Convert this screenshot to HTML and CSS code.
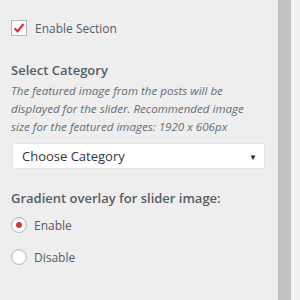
FILE: index.html
```html
<!DOCTYPE html>
<html lang="en">
<head>
  <meta charset="UTF-8" />
  <title>Slider Section</title>
  <link rel="stylesheet" href="styles.css">
</head>
<body>

<div class="panel">
  <div class="content">
    <label class="check-row">
      <span class="checkbox">
        <svg width="12" height="12" viewBox="0 0 12 12"><path d="M1.5 6.2 L4.6 9.3 L10.5 2" fill="none" stroke="#dd3333" stroke-width="2.2"/></svg>
      </span>
      Enable Section
    </label>

    <div class="field">
      <div class="field-title">Select Category</div>
      <p class="desc">The featured image from the posts will be displayed for the slider. Recommended image size for the featured images: 1920 x 606px</p>
      <div class="select">
        <span>Choose Category</span>
        <span class="arrow">&#9660;</span>
      </div>
    </div>

    <div class="field field-radio">
      <div class="field-title">Gradient overlay for slider image:</div>
      <label class="radio-row"><span class="radio checked"></span>Enable</label>
      <label class="radio-row"><span class="radio"></span>Disable</label>
    </div>
  </div>

  <div class="scrollbar">
    <div class="thumb"></div>
    <div class="edge"></div>
  </div>
</div>

</body>
</html>
```

FILE: styles.css
```css
* { box-sizing: border-box; }
body {
  margin: 0;
  font-family: 'Open Sans', 'Noto Sans', sans-serif;
  background: #eeeeee;
  color: #555d66;
  width: 300px;
  height: 300px;
  overflow: hidden;
}
.panel {
  display: flex;
  height: 300px;
}
.content {
  flex: 1;
  padding: 20px 12px 0 11px;
}
.check-row {
  display: flex;
  align-items: center;
  gap: 8px;
  font-size: 12px;
  height: 16px;
  color: #555d66;
}
.checkbox {
  width: 16px;
  height: 16px;
  background: #fff;
  border: 1px solid #b4b9be;
  display: flex;
  align-items: center;
  justify-content: center;
}
.field {
  margin-top: 25px;
}
.field-title {
  font-size: 13px;
  font-weight: 600;
  color: #555d66;
  line-height: 18px;
}
.desc {
  margin: 3px 8px 7px 0;
  font-size: 11.6px;
  font-style: italic;
  line-height: 18px;
  color: #666d74;
}
.select {
  display: flex;
  justify-content: space-between;
  align-items: center;
  width: 253px;
  height: 26px;
  margin-left: 1px;
  background: #fff;
  border: 1px solid #e5e5e5;
  padding: 0 7px 0 9px;
  font-size: 13px;
  color: #32373c;
}
.arrow {
  font-size: 8px;
  color: #23282d;
}
.field-radio {
  margin-top: 20px;
}
.radio-row {
  display: flex;
  align-items: center;
  gap: 7px;
  font-size: 12px;
  margin-top: 7px;
  height: 22px;
}
.radio-row + .radio-row {
  margin-top: 10px;
}
.radio {
  width: 16px;
  height: 16px;
  border-radius: 50%;
  background: #fff;
  border: 1px solid #b4b9be;
  box-shadow: inset 0 1px 2px rgba(0,0,0,0.1);
  display: flex;
  align-items: center;
  justify-content: center;
}
.radio.checked::after {
  content: "";
  width: 6px;
  height: 6px;
  border-radius: 50%;
  background: #dd3333;
}
.scrollbar {
  width: 22px;
  display: flex;
  background: #f1f1f1;
}
.thumb {
  width: 13px;
  background: #c1c1c1;
}
.edge {
  width: 1px;
  margin-left: 2px;
  background: #fff;
}
```
